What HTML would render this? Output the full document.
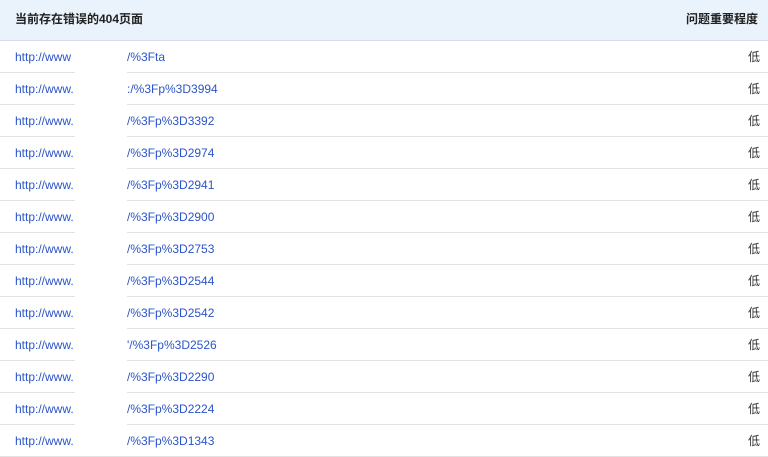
<!DOCTYPE html>
<html><head><meta charset="utf-8"><style>
body{margin:0;width:768px;height:453px;overflow:hidden;background:#fff;font-family:"Liberation Sans","Noto Sans CJK SC",sans-serif;position:relative}
.hd{height:40px;background:#eaf2fc;border-bottom:1px solid #d6dde6;position:relative;font-size:12px;font-weight:bold;color:#222;line-height:40px}
.hd .l{position:absolute;left:15px;top:-1px}
.hd .r{position:absolute;right:10px;top:-1px}
.row{height:31px;border-bottom:1px solid #e2e2e2;position:relative;font-size:12px;line-height:31px}
.row span{position:absolute;top:1px}
.row .u{left:15px;color:#2a55c8}
.row .u2{left:127px;color:#2a55c8}
.row .v{right:8px;color:#333;top:1px}
.mask{position:absolute;left:75px;top:41px;width:52px;height:412px;background:#fff}
</style></head><body>
<div class="hd"><span class="l">当前存在错误的404页面</span><span class="r">问题重要程度</span></div>
<div class="row"><span class="u">http://www</span><span class="u2">/%3Fta</span><span class="v">低</span></div>
<div class="row"><span class="u">http://www.</span><span class="u2">:/%3Fp%3D3994</span><span class="v">低</span></div>
<div class="row"><span class="u">http://www.</span><span class="u2">/%3Fp%3D3392</span><span class="v">低</span></div>
<div class="row"><span class="u">http://www.</span><span class="u2">/%3Fp%3D2974</span><span class="v">低</span></div>
<div class="row"><span class="u">http://www.</span><span class="u2">/%3Fp%3D2941</span><span class="v">低</span></div>
<div class="row"><span class="u">http://www.</span><span class="u2">/%3Fp%3D2900</span><span class="v">低</span></div>
<div class="row"><span class="u">http://www.</span><span class="u2">/%3Fp%3D2753</span><span class="v">低</span></div>
<div class="row"><span class="u">http://www.</span><span class="u2">/%3Fp%3D2544</span><span class="v">低</span></div>
<div class="row"><span class="u">http://www.</span><span class="u2">/%3Fp%3D2542</span><span class="v">低</span></div>
<div class="row"><span class="u">http://www.</span><span class="u2">'/%3Fp%3D2526</span><span class="v">低</span></div>
<div class="row"><span class="u">http://www.</span><span class="u2">/%3Fp%3D2290</span><span class="v">低</span></div>
<div class="row"><span class="u">http://www.</span><span class="u2">/%3Fp%3D2224</span><span class="v">低</span></div>
<div class="row"><span class="u">http://www.</span><span class="u2">/%3Fp%3D1343</span><span class="v">低</span></div>
<div class="mask"></div>
</body></html>
